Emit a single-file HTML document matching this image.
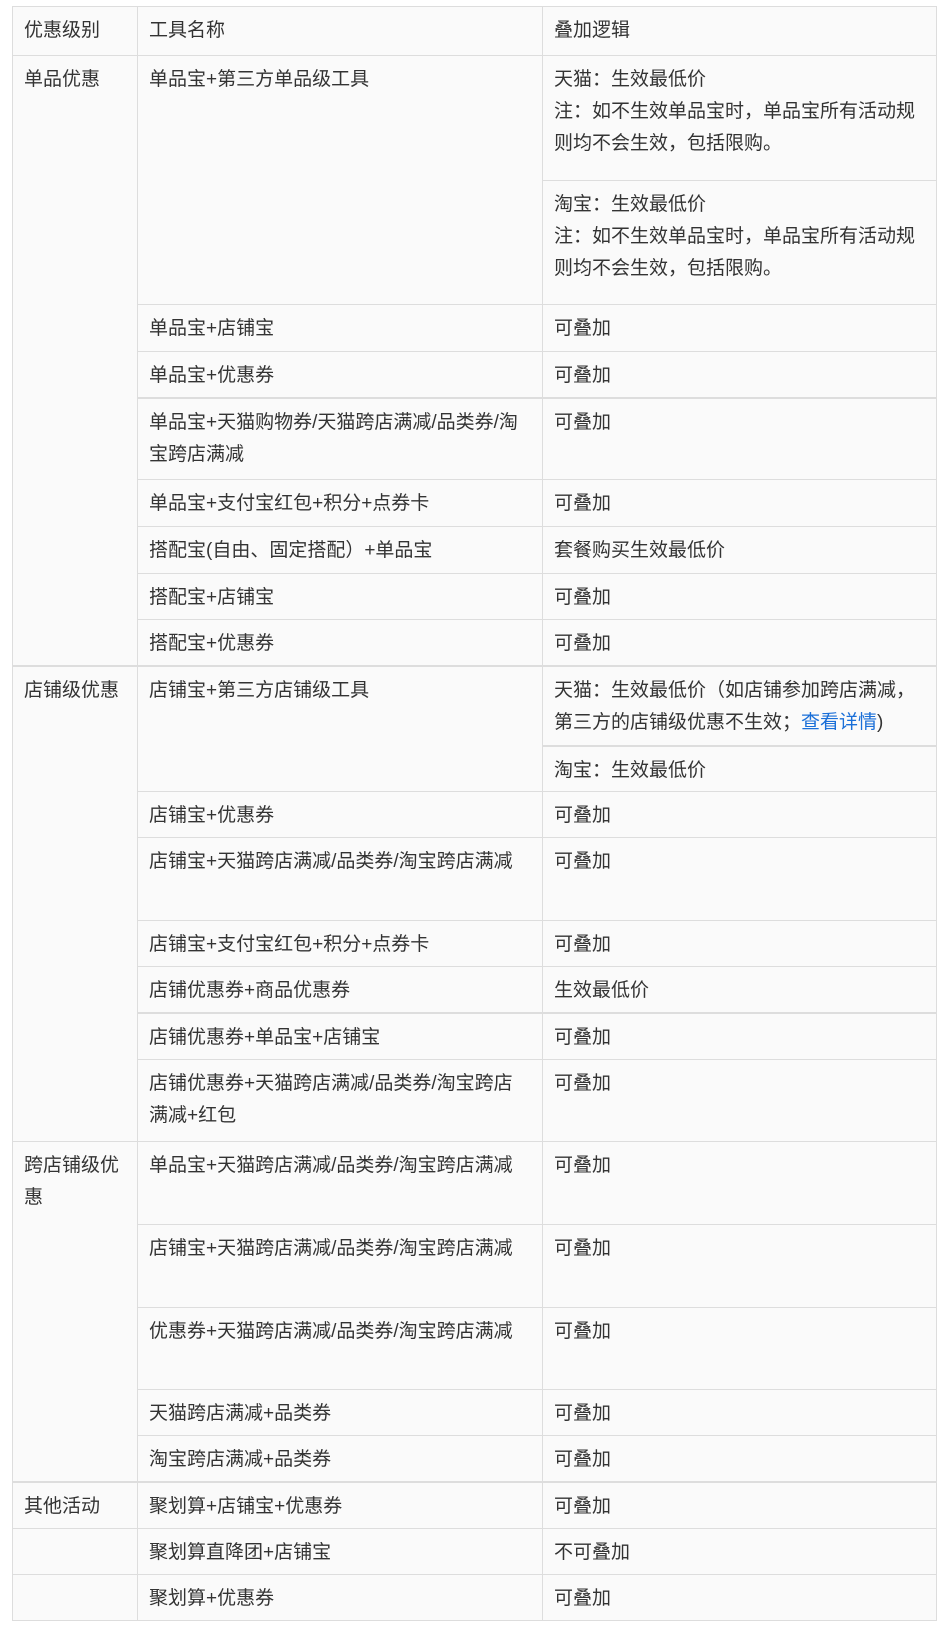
<!DOCTYPE html>
<html><head><meta charset="utf-8"><style>
html,body{margin:0;padding:0;background:#fff;}
body{width:944px;height:1632px;overflow:hidden;font-family:"Liberation Sans","Noto Sans CJK SC",sans-serif;}
table{position:absolute;left:12px;top:6px;border-collapse:collapse;table-layout:fixed;width:924px;background:#fafafa;color:#333;font-size:19px;}
td{border:1px solid #ddd;vertical-align:top;padding:8px 11px 3px;line-height:32px;box-sizing:border-box;}
td:nth-child(2){padding-right:14px;}
tr.t td{border-top:2px solid #ddd;}
a{color:#1a6fd8;text-decoration:none;}
</style></head><body>
<table>
<colgroup><col style="width:125px"><col style="width:405px"><col style="width:394px"></colgroup>
<tr style="height:49px"><td>优惠级别</td><td>工具名称</td><td>叠加逻辑</td></tr>
<tr style="height:125px"><td rowspan="9">单品优惠</td><td rowspan="2">单品宝+第三方单品级工具</td><td>天猫：生效最低价<br>注：如不生效单品宝时，单品宝所有活动规则均不会生效，包括限购。</td></tr>
<tr style="height:124px"><td>淘宝：生效最低价<br>注：如不生效单品宝时，单品宝所有活动规则均不会生效，包括限购。</td></tr>
<tr style="height:47px"><td>单品宝+店铺宝</td><td>可叠加</td></tr>
<tr style="height:46px"><td>单品宝+优惠券</td><td>可叠加</td></tr>
<tr class="t" style="height:82px"><td>单品宝+天猫购物券/天猫跨店满减/品类券/淘<br>宝跨店满减</td><td>可叠加</td></tr>
<tr style="height:47px"><td>单品宝+支付宝红包+积分+点券卡</td><td>可叠加</td></tr>
<tr style="height:47px"><td>搭配宝(自由、固定搭配）+单品宝</td><td>套餐购买生效最低价</td></tr>
<tr style="height:46px"><td>搭配宝+店铺宝</td><td>可叠加</td></tr>
<tr style="height:46px"><td>搭配宝+优惠券</td><td>可叠加</td></tr>
<tr class="t" style="height:80px"><td rowspan="8">店铺级优惠</td><td rowspan="2">店铺宝+第三方店铺级工具</td><td>天猫：生效最低价（如店铺参加跨店满减，<br>第三方的店铺级优惠不生效；<a>查看详情</a>)</td></tr>
<tr class="t" style="height:46px"><td>淘宝：生效最低价</td></tr>
<tr style="height:46px"><td>店铺宝+优惠券</td><td>可叠加</td></tr>
<tr style="height:83px"><td>店铺宝+天猫跨店满减/品类券/淘宝跨店满减</td><td>可叠加</td></tr>
<tr style="height:46px"><td>店铺宝+支付宝红包+积分+点券卡</td><td>可叠加</td></tr>
<tr style="height:46px"><td>店铺优惠券+商品优惠券</td><td>生效最低价</td></tr>
<tr class="t" style="height:47px"><td>店铺优惠券+单品宝+店铺宝</td><td>可叠加</td></tr>
<tr style="height:82px"><td>店铺优惠券+天猫跨店满减/品类券/淘宝跨店<br>满减+红包</td><td>可叠加</td></tr>
<tr style="height:83px"><td rowspan="5">跨店铺级优<br>惠</td><td>单品宝+天猫跨店满减/品类券/淘宝跨店满减</td><td>可叠加</td></tr>
<tr style="height:83px"><td>店铺宝+天猫跨店满减/品类券/淘宝跨店满减</td><td>可叠加</td></tr>
<tr style="height:82px"><td>优惠券+天猫跨店满减/品类券/淘宝跨店满减</td><td>可叠加</td></tr>
<tr style="height:46px"><td>天猫跨店满减+品类券</td><td>可叠加</td></tr>
<tr style="height:46px"><td>淘宝跨店满减+品类券</td><td>可叠加</td></tr>
<tr class="t" style="height:47px"><td>其他活动</td><td>聚划算+店铺宝+优惠券</td><td>可叠加</td></tr>
<tr style="height:46px"><td></td><td>聚划算直降团+店铺宝</td><td>不可叠加</td></tr>
<tr style="height:46px"><td></td><td>聚划算+优惠券</td><td>可叠加</td></tr>
</table>
</body></html>
